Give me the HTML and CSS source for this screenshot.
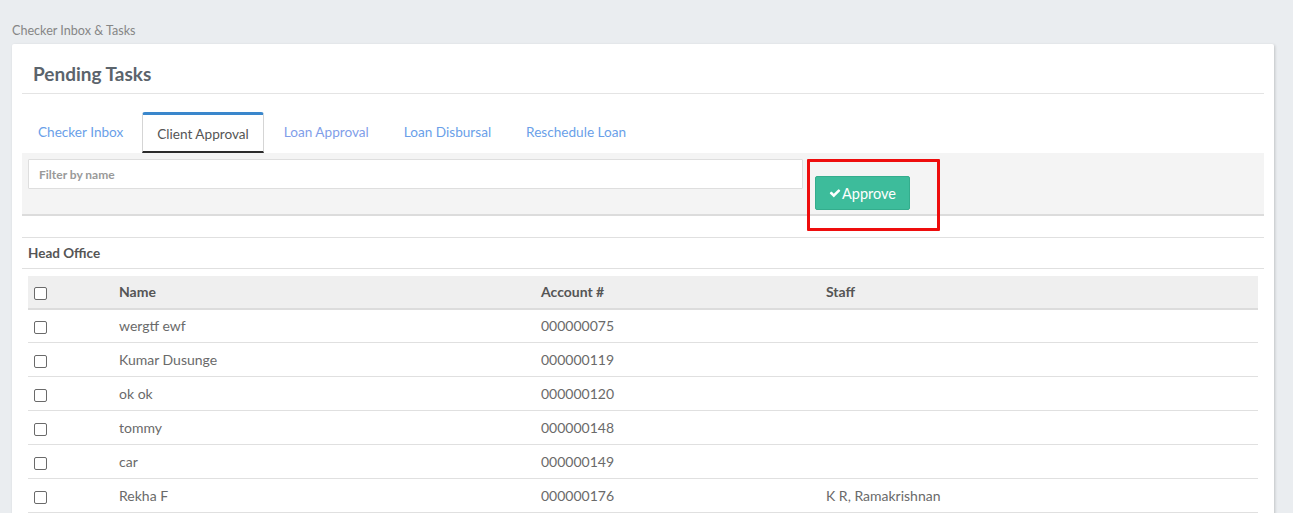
FILE: index.html
```html
<!DOCTYPE html>
<html>
<head>
<meta charset="utf-8">
<link rel="stylesheet" href="styles.css">
</head>
<body>
<div class="page">
  <div class="crumb">Checker Inbox &amp; Tasks</div>
  <div class="card">
    <h3 class="card-title">Pending Tasks</h3>
    <ul class="tabs">
      <li class="tab">Checker Inbox</li>
      <li class="tab active">Client Approval</li>
      <li class="tab visited">Loan Approval</li>
      <li class="tab">Loan Disbursal</li>
      <li class="tab">Reschedule Loan</li>
    </ul>
    <div class="filter-bar">
      <input class="filter-input" type="text" placeholder="Filter by name">
      <button class="btn-approve"><svg class="check" viewBox="0 0 1792 1792"><path d="M1671 566q0 40-28 68l-724 724-136 136q-28 28-68 28t-68-28l-136-136-362-362q-28-28-28-68t28-68l136-136q28-28 68-28t68 28l294 295 656-657q28-28 68-28t68 28l136 136q28 28 28 68z"/></svg>Approve</button>
      <div class="annotation"></div>
    </div>
    <div class="office">Head Office</div>
    <table class="grid">
      <thead>
        <tr><th class="c-check"><input type="checkbox"></th><th class="c-name">Name</th><th class="c-acc">Account #</th><th>Staff</th></tr>
      </thead>
      <tbody>
        <tr><td class="c-check"><input type="checkbox"></td><td>wergtf ewf</td><td>000000075</td><td></td></tr>
        <tr><td class="c-check"><input type="checkbox"></td><td>Kumar Dusunge</td><td>000000119</td><td></td></tr>
        <tr><td class="c-check"><input type="checkbox"></td><td>ok ok</td><td>000000120</td><td></td></tr>
        <tr><td class="c-check"><input type="checkbox"></td><td>tommy</td><td>000000148</td><td></td></tr>
        <tr><td class="c-check"><input type="checkbox"></td><td>car</td><td>000000149</td><td></td></tr>
        <tr><td class="c-check"><input type="checkbox"></td><td>Rekha F</td><td>000000176</td><td>K R, Ramakrishnan</td></tr>
      </tbody>
    </table>
  </div>
</div>
</body>
</html>
```

FILE: styles.css
```css
* { box-sizing: border-box; }
html, body { margin: 0; padding: 0; }
body {
  background: #eaedf0;
  font-family: Lato, "Open Sans", sans-serif;
  color: #666;
  overflow: hidden;
}
.page {
  padding: 23px 19px 0 12px;
}
.crumb {
  font-size: 12.6px;
  line-height: 16px;
  color: #868686;
  margin-bottom: 5px;
}
.card {
  background: #fff;
  border-radius: 2px;
  box-shadow: 1px 1px 3px rgba(0,0,0,0.18);
  padding: 0 10px 20px;
  height: 520px;
}
.card-title {
  margin: 0;
  padding: 18px 0 7px 11px;
  font-size: 19px;
  line-height: 24px;
  font-weight: 700;
  color: #5b646c;
  border-bottom: 1px solid #e4e4e4;
}
.tabs {
  list-style: none;
  margin: 18px 0 0 1px;
  padding: 0;
  display: flex;
  gap: 5px;
  height: 41px;
}
.tab {
  padding: 0 15px;
  font-size: 13.6px;
  line-height: 34px;
  color: #6a9fe9;
  border-top: 3px solid transparent;
}
.tab:first-child { padding-right: 14px; }
.tab.visited { color: #7f9ee9; }
.tab.active {
  color: #555;
  border-top: 3px solid #3a87cc;
  border-left: 1px solid #d5d5d5;
  border-right: 1px solid #d5d5d5;
  border-bottom: 2px solid #2b2b2b;
  border-radius: 3px 3px 0 0;
  line-height: 38px;
  padding: 0 14px;
}
.filter-bar {
  position: relative;
  display: flex;
  align-items: flex-start;
  gap: 12px;
  background: #f4f4f4;
  border-bottom: 2px solid #dcdcdc;
  padding: 6px 6px 4px;
  height: 63px;
}
.filter-input {
  width: 775px;
  height: 30px;
  border: 1px solid #dedede;
  border-radius: 1px;
  background: #fff;
  padding: 0 10px;
  font-family: Lato, "Open Sans", sans-serif;
  font-size: 12px;
  font-weight: 700;
  outline: none;
}
.filter-input::placeholder { color: #999; }
.btn-approve {
  margin-top: 17px;
  height: 34px;
  width: 95px;
  background: #3dbc9b;
  border: 1px solid #34ad8d;
  border-radius: 2px;
  color: #fff;
  font-family: Lato, "Open Sans", sans-serif;
  font-size: 14.5px;
  display: flex;
  align-items: center;
  justify-content: center;
  padding: 0;
}
.check {
  width: 12px;
  height: 12px;
  fill: #fff;
  margin-right: 1px;
}
.annotation {
  position: absolute;
  left: 785px;
  top: 6px;
  width: 133px;
  height: 72px;
  border: 3px solid #ee0d0d;
  border-radius: 1px;
}
.office {
  margin-top: 21px;
  border-top: 1px solid #e0e0e0;
  border-bottom: 1px solid #e0e0e0;
  height: 32px;
  line-height: 30px;
  padding-left: 6px;
  font-size: 13.5px;
  font-weight: 700;
  color: #555;
}
.grid {
  margin: 7px 6px 0;
  width: calc(100% - 12px);
  border-collapse: collapse;
  font-size: 14px;
}
.grid th {
  background: #efefef;
  height: 32.5px;
  text-align: left;
  font-weight: 700;
  color: #555;
  border-bottom: 2px solid #dcdcdc;
  padding: 0 8px;
}
.grid td {
  height: 34px;
  border-bottom: 1px solid #e0e0e0;
  padding: 0 8px;
  color: #6a6a6a;
}
.grid .c-check { width: 83px; padding-left: 6px; }
.grid .c-name { width: 422px; }
.grid .c-acc { width: 285px; }
.grid input[type=checkbox] {
  appearance: none;
  -webkit-appearance: none;
  width: 13px;
  height: 13px;
  margin: 3px 0 0 0;
  border: 1px solid #6a6a6a;
  border-radius: 2px;
  background: #fff;
  display: block;
}
```
